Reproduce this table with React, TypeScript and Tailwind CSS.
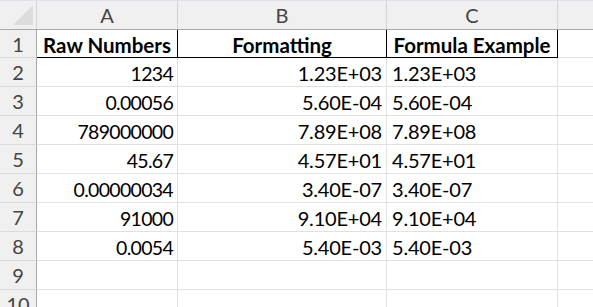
import React from "react";

const rows: [string, string, string][] = [
  ["1234", "1.23E+03", "1.23E+03"],
  ["0.00056", "5.60E-04", "5.60E-04"],
  ["789000000", "7.89E+08", "7.89E+08"],
  ["45.67", "4.57E+01", "4.57E+01"],
  ["0.00000034", "3.40E-07", "3.40E-07"],
  ["91000", "9.10E+04", "9.10E+04"],
  ["0.0054", "5.40E-03", "5.40E-03"],
];

const cols = "grid grid-cols-[37px_141px_209px_171px_1fr]";

function RowHead({ n, h }: { n: number; h: string }) {
  return (
    <div
      className={`${h} flex items-center justify-center bg-[#f0f0f0] border-r border-r-[#a8a8a8] border-b border-b-[#dadada] text-[#444] text-[20px] tracking-normal font-normal`}
    >
      {n}
    </div>
  );
}

export default function App() {
  return (
    <div
      className="w-[593px] h-[307px] overflow-hidden bg-white text-[20px] leading-none text-black border-t border-t-[#dde3ea]"
      style={{ fontFamily: "Lato, 'Noto Sans', sans-serif" }}
    >
      {/* column header */}
      <div className={`${cols} h-[29px] bg-[#f0f0f0] border-b border-b-[#a8a8a8] text-[#444]`}>
        <div className="relative border-r border-r-[#d4d4d4]">
          <div
            className="absolute left-[13px] top-[4px] w-[20px] h-[20px] bg-[#dcdcdc]"
            style={{ clipPath: "polygon(100% 0, 100% 100%, 0 100%)" }}
          />
        </div>
        <div className="flex items-center justify-center border-r border-r-[#d4d4d4]">A</div>
        <div className="flex items-center justify-center border-r border-r-[#d4d4d4]">B</div>
        <div className="flex items-center justify-center border-r border-r-[#d4d4d4]">C</div>
        <div />
      </div>

      {/* row 1 */}
      <div className={`${cols} h-[28px] font-bold text-[20.5px]`}>
        <RowHead n={1} h="h-[28px]" />
        <div className="flex items-end justify-center pb-[2px] border-r border-r-black border-b border-b-black">
          Raw Numbers
        </div>
        <div className="flex items-end justify-center pb-[2px] border-r border-r-black border-b border-b-black">
          Formatting
        </div>
        <div className="flex items-end justify-center pb-[2px] border-r border-r-black border-b border-b-black">
          Formula Example
        </div>
        <div className="border-b border-b-[#e1e1e1]" />
      </div>

      {rows.map((r, i) => (
        <div key={i} className={`${cols} h-[29px]`}>
          <RowHead n={i + 2} h="h-[29px]" />
          <div className="flex items-end justify-end pr-[4px] pb-[3px] border-r border-r-[#e1e1e1] border-b border-b-[#e1e1e1] text-[19.5px] tracking-[-0.7px]">
            {r[0]}
          </div>
          <div className="flex items-end justify-end pr-[4px] pb-[3px] border-r border-r-[#e1e1e1] border-b border-b-[#e1e1e1] tracking-[-0.2px]">
            {r[1]}
          </div>
          <div className="flex items-end justify-start pl-[5px] pb-[3px] border-r border-r-[#e1e1e1] border-b border-b-[#e1e1e1] tracking-[-0.2px]">
            {r[2]}
          </div>
          <div className="border-b border-b-[#e1e1e1]" />
        </div>
      ))}

      {[9, 10].map((n) => (
        <div key={n} className={`${cols} h-[29px]`}>
          <RowHead n={n} h="h-[29px]" />
          <div className="border-r border-r-[#e1e1e1] border-b border-b-[#e1e1e1]" />
          <div className="border-r border-r-[#e1e1e1] border-b border-b-[#e1e1e1]" />
          <div className="border-r border-r-[#e1e1e1] border-b border-b-[#e1e1e1]" />
          <div className="border-b border-b-[#e1e1e1]" />
        </div>
      ))}
    </div>
  );
}
